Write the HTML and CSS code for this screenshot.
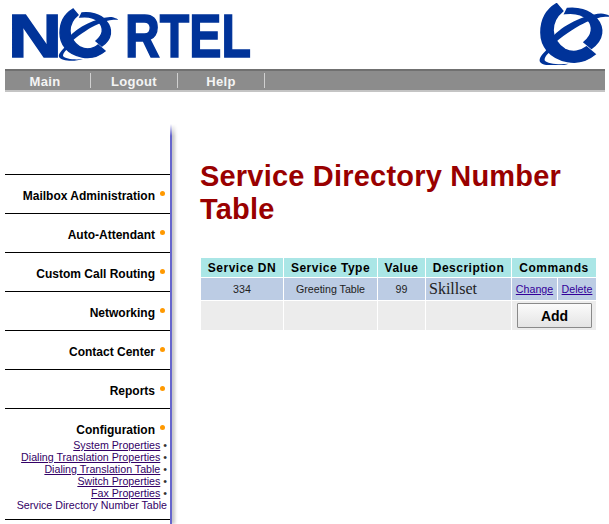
FILE: index.html
```html
<!DOCTYPE html>
<html>

<head>
    <title>Service Directory Number Table | Nortel</title>
    <meta charset="UTF-8">
    <link rel="stylesheet" href="styles.css">
</head>

<body>
    <svg width="0" height="0" class="defs">
        <symbol id="globe" viewBox="0 0 80 70">
            <!-- left side and bottom of the ring -->
            <path class="ring" d="M23 9 C13 15 10 24 10 33 C10 44 17 54 32 57 C42 59 49 56 55 51 L48 45 C43 49 36 50 30 47 C24 43 20 37 20 31 C20 24 23 19 28 15 Z" />
            <!-- upper right arc -->
            <path class="ring" d="M32 13 C40 12 50 14 56 21 C63 29 62 39 52 46 L46 41 C53 35 54 28 49 22 C45 18 38 16 30 17 Z" />
            <!-- swoosh -->
            <path class="swoosh" d="M19 37 C28 27 45 18 60 17 C64 17 68 19 68 20 C60 19 45 22 21 42 Z" />
            <path class="swoosh" d="M16 46 C12 50 8 54 9 57 C11 61 24 62 33 59 C25 60 15 59 13 56 C13 53 16 50 18 49 Z" />
        </symbol>
    </svg>

    <div class="header">
        <svg class="logo" width="300" height="76" viewBox="0 0 300 76">
            <text x="8" y="57" class="logo-text" textLength="54" lengthAdjust="spacingAndGlyphs">N</text>
            <text x="125" y="57" class="logo-text" textLength="126" lengthAdjust="spacingAndGlyphs">RTEL</text>
            <use href="#globe" x="50" y="0" width="80" height="70" />
        </svg>
        <svg class="logo-right" width="79" height="62" viewBox="0 0 79 62">
            <use href="#globe" x="-1" y="-10" width="96" height="84" />
        </svg>
    </div>

    <div class="nav">
        <a class="nav-item nav-first">Main</a>
        <a class="nav-item">Logout</a>
        <a class="nav-item">Help</a>
    </div>

    <div class="main">
        <div class="sidebar">
            <ul class="menu">
                <li><span>Mailbox Administration</span></li>
                <li><span>Auto-Attendant</span></li>
                <li><span>Custom Call Routing</span></li>
                <li><span>Networking</span></li>
                <li><span>Contact Center</span></li>
                <li><span>Reports</span></li>
                <li class="open">
                    <span>Configuration</span>
                    <div class="submenu">
                        <div><a href="#">System Properties</a></div>
                        <div><a href="#">Dialing Translation Properties</a></div>
                        <div><a href="#">Dialing Translation Table</a></div>
                        <div><a href="#">Switch Properties</a></div>
                        <div><a href="#">Fax Properties</a></div>
                        <div class="current">Service Directory Number Table</div>
                    </div>
                </li>
            </ul>
        </div>

        <div class="content">
            <h1>Service Directory Number Table</h1>
            <table class="dn-table">
                <colgroup>
                    <col class="col-dn">
                    <col class="col-type">
                    <col class="col-value">
                    <col class="col-desc">
                    <col class="col-change">
                    <col class="col-delete">
                </colgroup>
                <tr>
                    <th>Service DN</th>
                    <th>Service Type</th>
                    <th>Value</th>
                    <th>Description</th>
                    <th colspan="2">Commands</th>
                </tr>
                <tr class="data">
                    <td>334</td>
                    <td>Greeting Table</td>
                    <td>99</td>
                    <td class="desc">Skillset</td>
                    <td><a href="#">Change</a></td>
                    <td><a href="#">Delete</a></td>
                </tr>
                <tr class="actions">
                    <td></td>
                    <td></td>
                    <td></td>
                    <td></td>
                    <td colspan="2"><button type="button">Add</button></td>
                </tr>
            </table>
        </div>
    </div>
</body>

</html>
```

FILE: styles.css
```css
html {
    font-family: "Liberation Sans", Arial, sans-serif;
}

body {
    margin: 0;
    background-color: #ffffff;
    color: #000000;
    overflow: hidden;
}

.defs {
    display: block;
    height: 0;
}

.header {
    display: flex;
    justify-content: space-between;
    height: 69px;
}

.logo-text {
    font-family: "Liberation Sans", Arial, sans-serif;
    font-weight: bold;
    font-size: 62px;
    fill: #003399;
    stroke: #003399;
    stroke-width: 1.6px;
}

.ring {
    fill: #003399;
    stroke: #003399;
    stroke-width: 1.4px;
}

.swoosh {
    fill: #003399;
}

.logo {
    display: block;
    flex: none;
}

.logo-right {
    display: block;
    flex: none;
    margin-top: 3px;
}

.nav {
    display: flex;
    height: 19px;
    margin: 0 4px 0 5px;
    background-color: #8c8c8c;
    border-top: 2px solid #707070;
    border-bottom: 2px solid #c4c4c4;
}

.nav-item {
    width: 86px;
    margin-top: 2px;
    height: 15px;
    line-height: 17px;
    border-right: 1px solid #d0d0d0;
    color: #f4f4f4;
    font-size: 13px;
    font-weight: bold;
    letter-spacing: 0.3px;
    text-align: center;
}

.nav-first {
    width: 80px;
    padding-right: 5px;
}

.main {
    display: flex;
    padding-top: 32px;
}

.sidebar {
    width: 172px;
    height: 400px;
    flex: none;
    border-right: 2px solid #6666cc;
    box-shadow: 3px 0 3px #c8c8c8;
    clip-path: inset(0 -8px 0 0);
    box-sizing: border-box;
    padding-left: 5px;
    position: relative;
}

/* the line and its shadow fade in at the top */
.sidebar::before {
    content: "";
    position: absolute;
    top: 0;
    right: -8px;
    width: 12px;
    height: 12px;
    background: linear-gradient(#ffffff, rgba(255, 255, 255, 0));
}

.menu {
    list-style: none;
    margin: 50px 0 0;
    padding: 0;
    border-top: 1px solid #000000;
}

.menu>li {
    height: 38px;
    border-bottom: 1px solid #000000;
    text-align: right;
    padding-right: 15px;
    font-size: 12px;
    font-weight: bold;
    line-height: 42px;
    position: relative;
}

.menu>li::after {
    content: "";
    position: absolute;
    right: 5px;
    top: 16px;
    width: 5px;
    height: 5px;
    border-radius: 50%;
    background-color: #ff9900;
}

.menu>li.open {
    height: 110px;
}

.submenu {
    margin-top: -12px;
    margin-right: -12px;
    font-size: 10.67px;
    font-weight: normal;
    line-height: 12px;
}

.submenu a {
    color: #330066;
}

.submenu a::after {
    content: " \2022";
    display: inline-block;
    white-space: pre;
    color: #333333;
}

.current {
    color: #330066;
    white-space: nowrap;
}

.content {
    padding-left: 28px;
    width: 400px;
}

h1 {
    margin: 36px 0 31px;
    font-size: 29px;
    line-height: 33px;
    font-weight: bold;
    color: #990000;
    letter-spacing: 0.2px;
}

.dn-table {
    border-collapse: separate;
    border-spacing: 1px;
    table-layout: fixed;
    width: 397px;
    font-size: 10.67px;
}

.col-dn {
    width: 82px;
}

.col-type {
    width: 93px;
}

.col-value {
    width: 47px;
}

.col-desc {
    width: 85px;
}

.col-change {
    width: 45px;
}

.col-delete {
    width: 38px;
}

.dn-table th {
    background-color: #aae6e6;
    font-size: 12px;
    height: 19px;
    padding: 0;
    white-space: nowrap;
    letter-spacing: 0.5px;
}

.dn-table td {
    text-align: center;
    padding: 0;
    color: #222222;
}

.data td {
    background-color: #bccce4;
    height: 22px;
}

.data .desc {
    font-family: "Liberation Serif", serif;
    font-size: 16px;
    text-align: left;
    padding-left: 3px;
}

.data a {
    color: #330099;
}

.actions td {
    background-color: #ececec;
    height: 29px;
}

.actions button {
    width: 75px;
    height: 25px;
    display: block;
    margin: 0 0 0 5px;
    font-family: inherit;
    font-size: 14px;
    font-weight: bold;
    background: linear-gradient(#fbfbfb, #e4e4e4);
    border: 1px solid #8a8a8a;
    border-radius: 1px;
}
```
